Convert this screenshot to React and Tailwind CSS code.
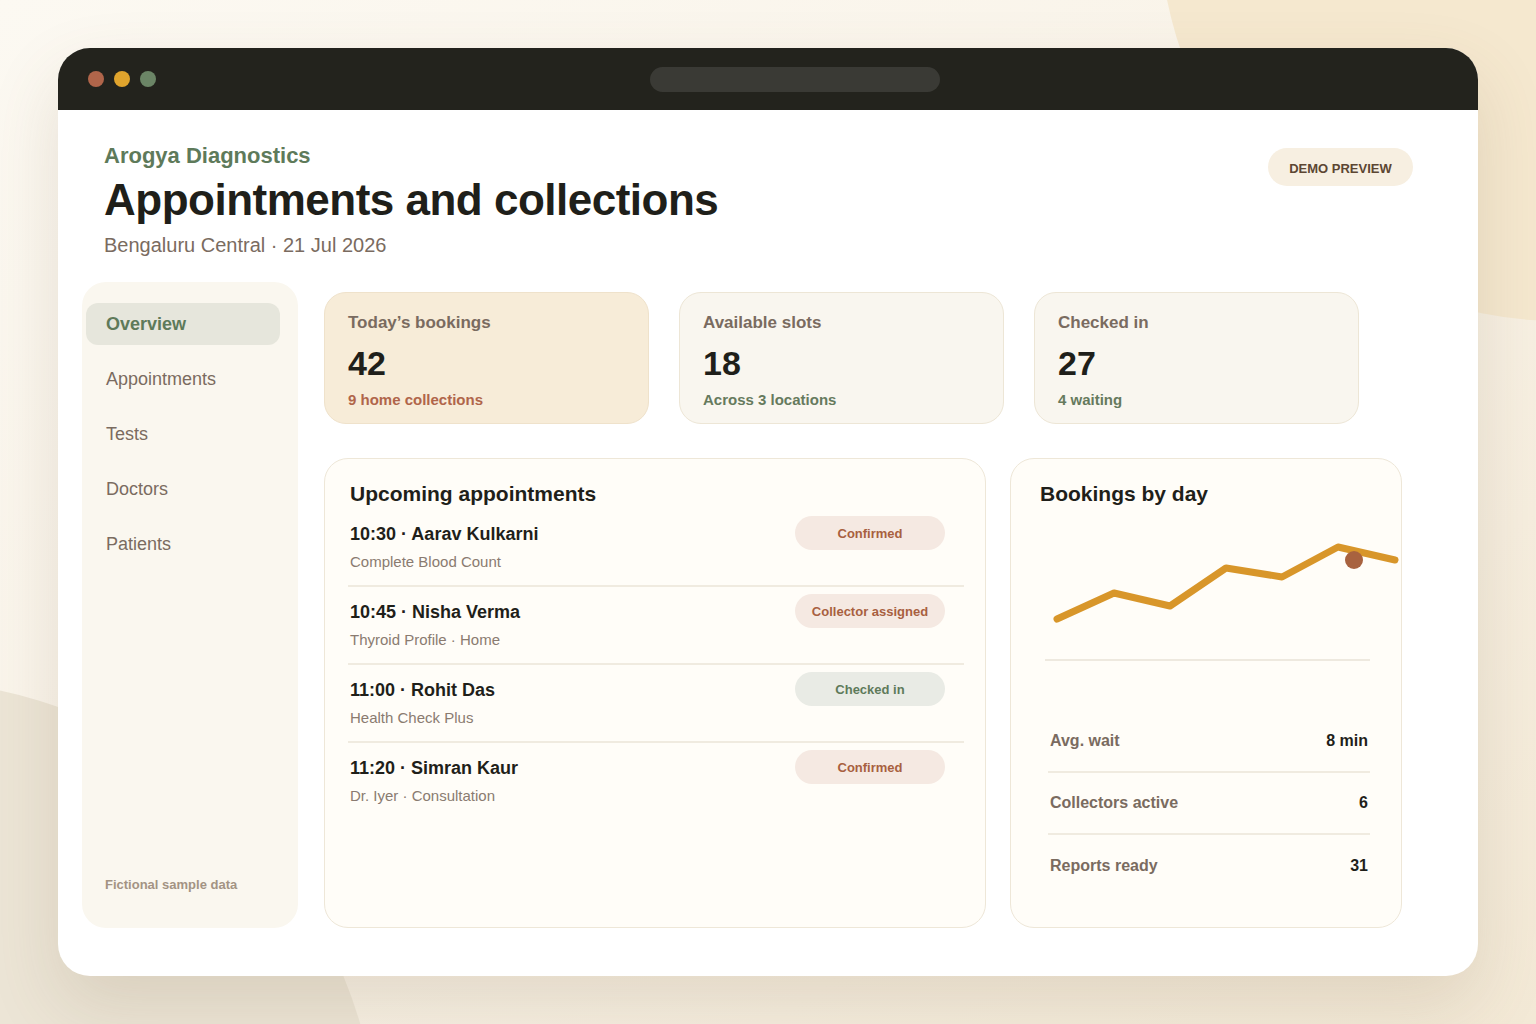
import React from "react";

const appts = [
  { name: "10:30 · Aarav Kulkarni", sub: "Complete Blood Count", badge: "Confirmed", kind: "warm" },
  { name: "10:45 · Nisha Verma", sub: "Thyroid Profile · Home", badge: "Collector assigned", kind: "warm" },
  { name: "11:00 · Rohit Das", sub: "Health Check Plus", badge: "Checked in", kind: "sage" },
  { name: "11:20 · Simran Kaur", sub: "Dr. Iyer · Consultation", badge: "Confirmed", kind: "warm" },
];

const stats = [
  { label: "Avg. wait", value: "8 min" },
  { label: "Collectors active", value: "6" },
  { label: "Reports ready", value: "31" },
];

function StatCard({ label, value, sub, highlight }) {
  return (
    <div
      className={
        "h-[132px] rounded-[22px] border pl-[23px] pt-[19px] " +
        (highlight ? "bg-[#f7ecd8] border-[#efe2cb]" : "bg-[#f9f6ef] border-[#ede6d6]")
      }
    >
      <div className="text-[17px] leading-[22px] font-bold text-[#7a6b60]">{label}</div>
      <div className="mt-[9px] text-[34px] leading-[40px] font-bold text-[#1f1f1a]">{value}</div>
      <div
        className={
          "mt-[7px] text-[15px] leading-[20px] font-bold " +
          (highlight ? "text-[#b0654a]" : "text-[#667a5d]")
        }
      >
        {sub}
      </div>
    </div>
  );
}

export default function App() {
  return (
    <div
      className="relative w-[1536px] h-[1024px] overflow-hidden bg-gradient-to-br from-[#fcf9f2] via-[#f9f3e8] to-[#f3e9d6]"
      style={{ fontFamily: '"Liberation Sans", Arial, sans-serif' }}
    >
      <div className="absolute left-[1159px] top-[-481px] w-[802px] h-[802px] rounded-full bg-[#f5e8cf]" />
      <div className="absolute left-[-580px] top-[680px] w-[960px] h-[960px] rounded-full bg-[#ece5d6]" />

      <div className="relative pt-[48px] pl-[58px]">
        <div className="w-[1420px] h-[928px] rounded-[32px] overflow-hidden bg-white shadow-[0_30px_70px_rgba(120,95,60,0.16)] flex flex-col">
          {/* title bar */}
          <div className="h-[62px] bg-[#23231d] flex items-center relative shrink-0">
            <div className="flex gap-[10px] pl-[30px]">
              <div className="w-[16px] h-[16px] rounded-full bg-[#b0654a]" />
              <div className="w-[16px] h-[16px] rounded-full bg-[#e0a42d]" />
              <div className="w-[16px] h-[16px] rounded-full bg-[#6b8566]" />
            </div>
            <div className="ml-[494px] w-[290px] h-[25px] rounded-full bg-[#3a3a35]" />
          </div>

          {/* header */}
          <div className="flex justify-between pl-[46px] pr-[65px] pt-[32px]">
            <div>
              <div className="text-[22px] leading-[28px] font-bold text-[#5e7a5a]">Arogya Diagnostics</div>
              <div className="mt-[4px] text-[44px] leading-[52px] font-bold text-[#1f1f1a] tracking-[-0.5px]">
                Appointments and collections
              </div>
              <div className="mt-[5px] text-[20px] leading-[28px] text-[#7a6b60]">
                Bengaluru Central · 21 Jul 2026
              </div>
            </div>
            <div className="mt-[6px] h-[38px] w-[145px] rounded-full bg-[#f7efe1] flex items-center justify-center pt-[3px] text-[13px] font-bold text-[#5c4632]">
              DEMO PREVIEW
            </div>
          </div>

          {/* body */}
          <div className="flex pl-[24px] mt-[23px] pb-[48px] flex-1">
            {/* sidebar */}
            <div className="w-[216px] rounded-[24px] bg-[#faf7ef] pl-[4px] pr-[18px] pt-[21px] pb-[35px] flex flex-col">
              <div className="flex flex-col gap-[13px]">
                <div className="h-[42px] rounded-[12px] bg-[#e6e6dc] flex items-center pl-[20px] text-[18px] font-bold text-[#5e7a5a]">
                  Overview
                </div>
                {["Appointments", "Tests", "Doctors", "Patients"].map((t) => (
                  <div key={t} className="h-[42px] flex items-center pl-[20px] text-[18px] text-[#7a6b60]">
                    {t}
                  </div>
                ))}
              </div>
              <div className="mt-auto pl-[19px] text-[13px] leading-[16px] font-bold text-[#a39383]">
                Fictional sample data
              </div>
            </div>

            {/* main */}
            <div className="ml-[26px] w-[1078px] pt-[10px] flex flex-col">
              <div className="grid grid-cols-[325px_325px_325px] gap-[30px]">
                <StatCard label="Today’s bookings" value="42" sub="9 home collections" highlight />
                <StatCard label="Available slots" value="18" sub="Across 3 locations" />
                <StatCard label="Checked in" value="27" sub="4 waiting" />
              </div>

              <div className="mt-[34px] flex gap-[24px] flex-1">
                {/* upcoming */}
                <div className="w-[662px] rounded-[24px] border border-[#eee7d8] bg-[#fffdf8] pt-[21px]">
                  <div className="pl-[25px] text-[21px] leading-[28px] font-bold text-[#1f1f1a]">
                    Upcoming appointments
                  </div>
                  <div className="ml-[23px] mr-[21px] mt-[1px]">
                    {appts.map((a, i) => (
                      <div
                        key={a.name}
                        className={
                          "flex justify-between pt-[7px] pb-[13px] " +
                          (i < appts.length - 1 ? "border-b-2 border-[#f0ebe0]" : "")
                        }
                      >
                        <div className="pl-[2px]">
                          <div className="mt-[6px] text-[18px] leading-[24px] font-bold text-[#1f1f1a]">{a.name}</div>
                          <div className="mt-[6px] text-[15px] leading-[20px] text-[#8a7b70]">{a.sub}</div>
                        </div>
                        <div
                          className={
                            "mr-[19px] w-[150px] h-[34px] rounded-full flex items-center justify-center pt-[2px] text-[13px] font-bold " +
                            (a.kind === "warm" ? "bg-[#f5e9e2] text-[#a8603f]" : "bg-[#e9ebe5] text-[#5e7a5a]")
                          }
                        >
                          {a.badge}
                        </div>
                      </div>
                    ))}
                  </div>
                </div>

                {/* bookings by day */}
                <div className="w-[392px] rounded-[24px] border border-[#eee7d8] bg-[#fffdf8] pt-[21px]">
                  <div className="pl-[29px] text-[21px] leading-[28px] font-bold text-[#1f1f1a]">Bookings by day</div>
                  <svg width="392" height="160" viewBox="0 0 392 160" className="block -ml-px">
                    <polyline
                      points="47,111 104,85 160,98 216,60 272,69 328,39 385,52"
                      fill="none"
                      stroke="#d8962a"
                      strokeWidth="7"
                      strokeLinecap="round"
                      strokeLinejoin="round"
                    />
                    <circle cx="344" cy="52" r="9" fill="#a8623f" />
                    <line x1="35" y1="152" x2="360" y2="152" stroke="#eee9df" strokeWidth="2" />
                  </svg>
                  <div className="ml-[37px] mr-[31px] mt-[43px]">
                    {stats.map((s, i) => (
                      <div
                        key={s.label}
                        className={
                          "h-[62px] flex items-center justify-between px-[2px] " +
                          (i < stats.length - 1 ? "border-b-2 border-[#f0ebe0]" : "")
                        }
                      >
                        <span className="text-[16px] font-bold text-[#7a6b60]">{s.label}</span>
                        <span className="text-[16px] font-bold text-[#1f1f1a]">{s.value}</span>
                      </div>
                    ))}
                  </div>
                </div>
              </div>
            </div>
          </div>
        </div>
      </div>
    </div>
  );
}
